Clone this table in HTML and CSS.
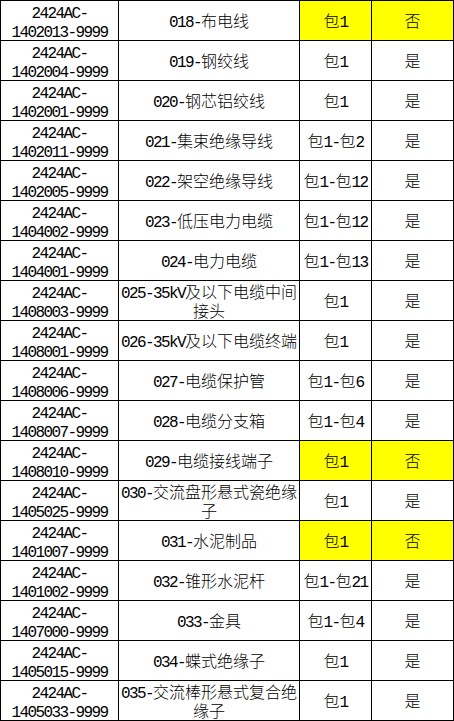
FILE: index.html
```html
<!DOCTYPE html>
<html lang="zh-CN">
<head>
<meta charset="utf-8">
<title>物资清单</title>
<link rel="stylesheet" href="styles.css">
</head>
<body>
<div class="sheet">
  <div class="c code"><span class="l">2424AC-<br>1402013-9999</span></div>
  <div class="c name"><span class="l">018-</span>布电线</div>
  <div class="c pk hl">包<span class="l">1</span></div>
  <div class="c yn hl">否</div>

  <div class="c code"><span class="l">2424AC-<br>1402004-9999</span></div>
  <div class="c name"><span class="l">019-</span>钢绞线</div>
  <div class="c pk">包<span class="l">1</span></div>
  <div class="c yn">是</div>

  <div class="c code"><span class="l">2424AC-<br>1402001-9999</span></div>
  <div class="c name"><span class="l">020-</span>钢芯铝绞线</div>
  <div class="c pk">包<span class="l">1</span></div>
  <div class="c yn">是</div>

  <div class="c code"><span class="l">2424AC-<br>1402011-9999</span></div>
  <div class="c name"><span class="l">021-</span>集束绝缘导线</div>
  <div class="c pk">包<span class="l">1-</span>包<span class="l">2</span></div>
  <div class="c yn">是</div>

  <div class="c code"><span class="l">2424AC-<br>1402005-9999</span></div>
  <div class="c name"><span class="l">022-</span>架空绝缘导线</div>
  <div class="c pk">包<span class="l">1-</span>包<span class="l">12</span></div>
  <div class="c yn">是</div>

  <div class="c code"><span class="l">2424AC-<br>1404002-9999</span></div>
  <div class="c name"><span class="l">023-</span>低压电力电缆</div>
  <div class="c pk">包<span class="l">1-</span>包<span class="l">12</span></div>
  <div class="c yn">是</div>

  <div class="c code"><span class="l">2424AC-<br>1404001-9999</span></div>
  <div class="c name"><span class="l">024-</span>电力电缆</div>
  <div class="c pk">包<span class="l">1-</span>包<span class="l">13</span></div>
  <div class="c yn">是</div>

  <div class="c code"><span class="l">2424AC-<br>1408003-9999</span></div>
  <div class="c name"><span class="l">025-35kV</span>及以下电缆中间接头</div>
  <div class="c pk">包<span class="l">1</span></div>
  <div class="c yn">是</div>

  <div class="c code"><span class="l">2424AC-<br>1408001-9999</span></div>
  <div class="c name"><span class="l">026-35kV</span>及以下电缆终端</div>
  <div class="c pk">包<span class="l">1</span></div>
  <div class="c yn">是</div>

  <div class="c code"><span class="l">2424AC-<br>1408006-9999</span></div>
  <div class="c name"><span class="l">027-</span>电缆保护管</div>
  <div class="c pk">包<span class="l">1-</span>包<span class="l">6</span></div>
  <div class="c yn">是</div>

  <div class="c code"><span class="l">2424AC-<br>1408007-9999</span></div>
  <div class="c name"><span class="l">028-</span>电缆分支箱</div>
  <div class="c pk">包<span class="l">1-</span>包<span class="l">4</span></div>
  <div class="c yn">是</div>

  <div class="c code"><span class="l">2424AC-<br>1408010-9999</span></div>
  <div class="c name"><span class="l">029-</span>电缆接线端子</div>
  <div class="c pk hl">包<span class="l">1</span></div>
  <div class="c yn hl">否</div>

  <div class="c code"><span class="l">2424AC-<br>1405025-9999</span></div>
  <div class="c name"><span class="l">030-</span>交流盘形悬式瓷绝缘子</div>
  <div class="c pk">包<span class="l">1</span></div>
  <div class="c yn">是</div>

  <div class="c code"><span class="l">2424AC-<br>1401007-9999</span></div>
  <div class="c name"><span class="l">031-</span>水泥制品</div>
  <div class="c pk hl">包<span class="l">1</span></div>
  <div class="c yn hl">否</div>

  <div class="c code"><span class="l">2424AC-<br>1401002-9999</span></div>
  <div class="c name"><span class="l">032-</span>锥形水泥杆</div>
  <div class="c pk">包<span class="l">1-</span>包<span class="l">21</span></div>
  <div class="c yn">是</div>

  <div class="c code"><span class="l">2424AC-<br>1407000-9999</span></div>
  <div class="c name"><span class="l">033-</span>金具</div>
  <div class="c pk">包<span class="l">1-</span>包<span class="l">4</span></div>
  <div class="c yn">是</div>

  <div class="c code"><span class="l">2424AC-<br>1405015-9999</span></div>
  <div class="c name"><span class="l">034-</span>蝶式绝缘子</div>
  <div class="c pk">包<span class="l">1</span></div>
  <div class="c yn">是</div>

  <div class="c code"><span class="l">2424AC-<br>1405033-9999</span></div>
  <div class="c name"><span class="l">035-</span>交流棒形悬式复合绝缘子</div>
  <div class="c pk">包<span class="l">1</span></div>
  <div class="c yn">是</div>
</div>
</body>
</html>
```

FILE: styles.css
```css
html, body {
  margin: 0;
  padding: 0;
  background: #ffffff;
}

.sheet {
  width: 454px;
  box-sizing: border-box;
  display: grid;
  grid-template-columns: 117px 180px 71px 81px;
  grid-auto-rows: 39px;
  gap: 1px;
  padding: 1px;
  background: #000000;
  font-family: "Noto Sans CJK SC", sans-serif;
  font-weight: 300;
  font-size: 16px;
  line-height: 19px;
  color: #000000;
}

.c {
  background: #ffffff;
  display: block;
  align-content: center;
  text-align: center;
  padding: 0 1px;
  overflow: hidden;
}

.hl {
  background: #ffff00;
}

.l {
  font-family: "Liberation Mono", monospace;
  font-weight: 400;
  font-size: 16px;
  line-height: 0;
  letter-spacing: -1.6px;
}
```
